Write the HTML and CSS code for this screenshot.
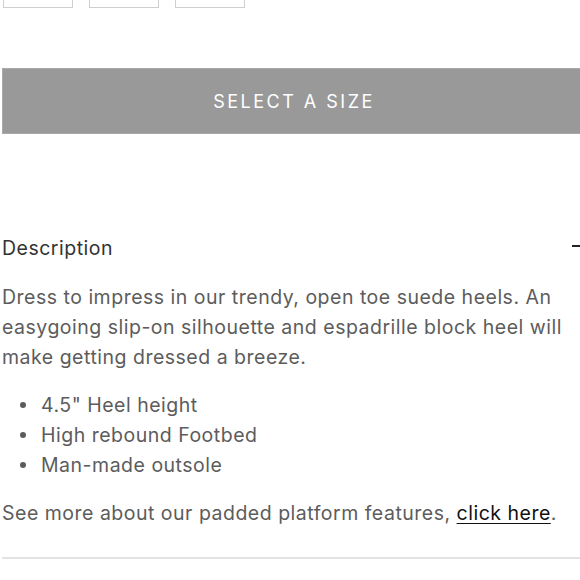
FILE: index.html
```html
<!DOCTYPE html>
<html>
<head>
<meta charset="utf-8">
<link rel="stylesheet" href="styles.css">
</head>
<body>
<div class="page">
  <div class="sizes">
    <div class="size"></div>
    <div class="size"></div>
    <div class="size"></div>
  </div>
  <button class="select">SELECT A SIZE</button>
  <section class="desc">
    <div class="desc-head">
      <h2>Description</h2>
      <span class="minus"></span>
    </div>
    <p class="text">Dress to impress in our trendy, open toe suede heels. An easygoing slip-on silhouette and espadrille block heel will make getting dressed a breeze.</p>
    <ul class="list">
      <li>4.5" Heel height</li>
      <li>High rebound Footbed</li>
      <li>Man-made outsole</li>
    </ul>
    <p class="text more">See more about our padded platform features, <a href="#">click here</a>.</p>
  </section>
  <hr class="divider">
</div>
</body>
</html>
```
FILE: styles.css
```css
html, body {
  margin: 0;
  padding: 0;
  background: #fff;
  overflow: hidden;
}
.page {
  width: 580px;
  margin-left: 2px;
  margin-top: -32px;
  font-family: Inter, "DejaVu Sans", sans-serif;
  color: #5c5c5c;
}
.sizes {
  display: flex;
  gap: 16px;
  margin-left: 1px;
}
.size {
  width: 68px;
  height: 38px;
  border: 1px solid #cfcfcf;
}
.select {
  display: block;
  width: 580px;
  height: 66px;
  margin-top: 60px;
  background: #999999;
  border: 1px solid #a9a9a9;
  color: #fff;
  font-family: inherit;
  font-size: 18px;
  letter-spacing: 2.5px;
  padding: 0 0 0 4px;
}
.desc {
  margin-top: 99px;
}
.desc-head {
  display: flex;
  align-items: center;
  justify-content: space-between;
  height: 30px;
}
.desc-head h2 {
  margin: 0;
  font-size: 19.5px;
  letter-spacing: 0.5px;
  font-weight: 400;
  color: #333;
  line-height: 30px;
}
.minus {
  width: 10px;
  height: 2px;
  background: #222;
  margin-top: -4px;
}
.text {
  font-size: 19.5px;
  letter-spacing: 0.5px;
  line-height: 30px;
  margin: 19px 0 0;
}
.list {
  list-style: none;
  margin: 18px 0 0;
  padding-left: 39px;
  font-size: 19.5px;
  letter-spacing: 0.5px;
  line-height: 30px;
}
.list li {
  position: relative;
}
.list li::before {
  content: "";
  position: absolute;
  left: -21px;
  top: 12px;
  width: 6px;
  height: 6px;
  border-radius: 50%;
  background: #5c5c5c;
}
.more {
  margin-top: 18px;
}
.more a {
  color: #111;
  text-decoration: underline;
  text-underline-offset: 3px;
}
.divider {
  border: 0;
  border-top: 2px solid #e3e3e3;
  margin: 29px 0 0;
  width: 580px;
}
```
